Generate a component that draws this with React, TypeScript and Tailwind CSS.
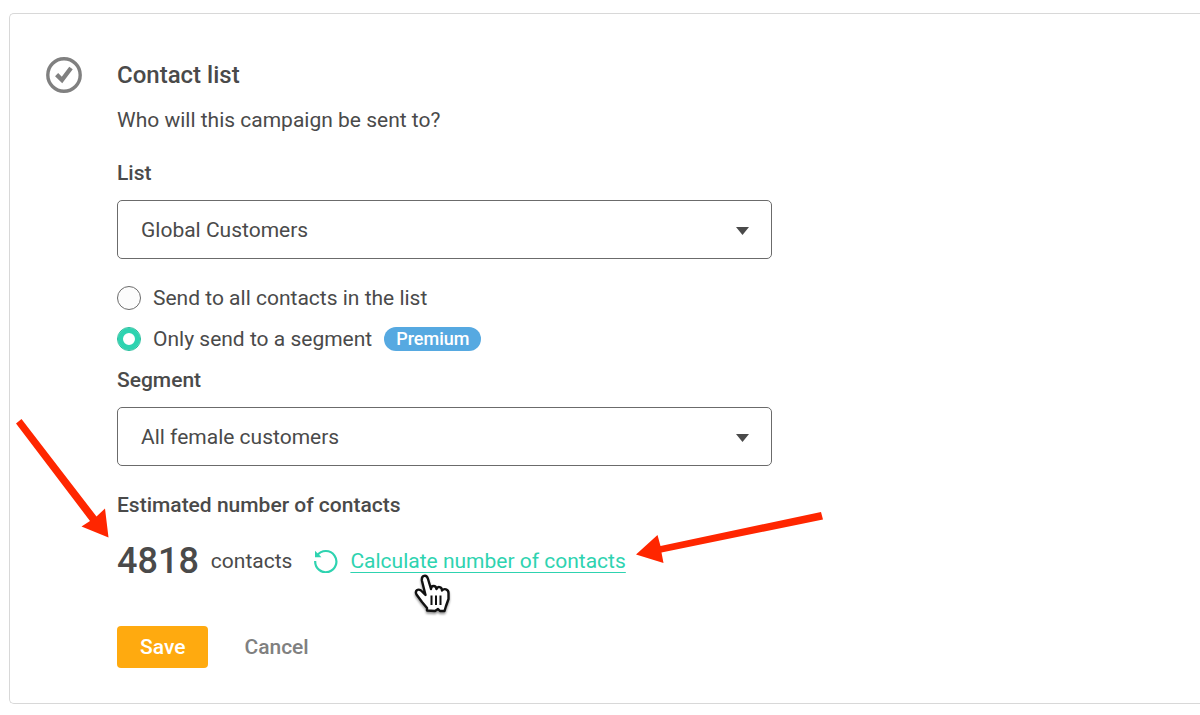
import React, { useState } from 'react';

interface SelectFieldProps {
  id: string;
  label: string;
  options: string[];
}

const SelectField: React.FC<SelectFieldProps> = ({ id, label, options }) => (
  <div className="flex flex-col gap-[15px]">
    <label htmlFor={id} className="text-[21px] leading-6 font-medium">{label}</label>
    <div className="relative">
      <select
        id={id}
        className="block w-full h-[59px] appearance-none rounded-[5px] border border-[#6b6b6b] bg-white px-[23px] text-[21px] leading-6 outline-none"
      >
        {options.map((option) => (
          <option key={option}>{option}</option>
        ))}
      </select>
      <svg className="pointer-events-none absolute right-[23px] top-[27px] h-[8px] w-[13px]" viewBox="0 0 13 8" aria-hidden="true">
        <path d="M0 0H13L6.5 8Z" fill="#4a4a4a" />
      </svg>
    </div>
  </div>
);

const radioClass =
  'size-6 shrink-0 appearance-none rounded-full border border-[#6b6b6b] bg-[#fcfcfc] checked:border-[#20bd9a] checked:bg-white checked:shadow-[inset_0_0_0_5px_#2ed3b0]';

const App: React.FC = () => {
  const [audience, setAudience] = useState('segment');

  return (
    <main className="min-h-screen overflow-hidden bg-white pt-[13px] pb-[10px] pl-[9px] font-['Roboto',sans-serif] text-[#4a4a4a]">
      <section className="flex items-start gap-[35px] rounded-l-[5px] border border-r-0 border-[#d8d8d8] pt-[43px] pr-4 pb-[35px] pl-9">
        <svg className="size-9 shrink-0" viewBox="0 0 36 36" fill="none" aria-hidden="true">
          <circle cx="18" cy="18" r="16.2" stroke="#808080" strokeWidth="3.4" />
          <path d="M10.6 17.6L16 23L25 11" stroke="#808080" strokeWidth="4.4" />
        </svg>

        <form className="flex w-full max-w-[655px] flex-col" onSubmit={(e) => e.preventDefault()}>
          <h2 className="text-[24px] leading-9 font-medium">Contact list</h2>
          <p className="mt-[15px] text-[21px] leading-6">Who will this campaign be sent to?</p>

          <div className="mt-[29px]">
            <SelectField id="list" label="List" options={['Global Customers']} />
          </div>

          <div className="mt-[27px] flex flex-col gap-[17px] text-[21px] leading-6">
            <label className="flex items-center gap-3">
              <input
                type="radio"
                name="audience"
                className={radioClass}
                checked={audience === 'all'}
                onChange={() => setAudience('all')}
              />
              Send to all contacts in the list
            </label>
            <label className="flex items-center gap-3">
              <input
                type="radio"
                name="audience"
                className={radioClass}
                checked={audience === 'segment'}
                onChange={() => setAudience('segment')}
              />
              Only send to a segment
              <span className="rounded-full bg-[#56a9e1] px-3 text-[18px] font-medium text-white">Premium</span>
            </label>
          </div>

          <div className="mt-[17px]">
            <SelectField id="segment" label="Segment" options={['All female customers']} />
          </div>

          <h3 className="mt-[27px] text-[21px] leading-6 font-medium">Estimated number of contacts</h3>

          <div className="relative mt-6 flex items-center text-[21px] leading-10">
            <strong className="text-[36px] font-medium">4818</strong>
            <span className="ml-3">contacts</span>
            <svg className="ml-[22px] size-6 shrink-0" viewBox="0 0 24 24" fill="none" aria-hidden="true">
              <path d="M3.2 6.4A10.6 10.6 0 1 1 1.2 12" stroke="#2ed3b0" strokeWidth="2.2" />
              <path d="M1 1.8V8.2H7.4L5.6 6.2Z" fill="#2ed3b0" />
            </svg>
            <a href="#calculate" className="ml-3 text-[#2ed3b0] underline decoration-1 underline-offset-4">
              Calculate number of contacts
            </a>

            <svg className="pointer-events-none absolute -left-[101px] -top-[122px] h-[120px] w-[94px]" viewBox="0 0 94 120" aria-hidden="true">
              <path d="M0 4.5L5.5 0L80.5 97.5L89 89.5L92.5 118.5L65.5 107.5L74 102Z" fill="#ff2600" />
            </svg>
            <svg className="pointer-events-none absolute left-[519px] -top-[29px] h-[52px] w-[188px]" viewBox="0 0 188 52" aria-hidden="true">
              <path d="M0 42.5L21.5 23L24.5 34L185 0L187 7.5L25.5 40.5L27.5 51Z" fill="#ff2600" />
            </svg>
            <svg className="pointer-events-none absolute left-[297px] top-[33px] h-[44px] w-[38px] drop-shadow-[0_2px_1px_#0006]" viewBox="0 0 38 44" aria-hidden="true">
              <path
                d="M13 36.5V34L8 28L2.5 20.5C0.5 16.5 4 14.5 7 16.5L11.5 21L8 7C7 1 12.5 0 14 5L17 15C17 11 22 11 22.5 15C23.5 12 28 12.5 28 16.5C30 14 34.5 15 34.5 19V25L32 32L30.5 37L26 37L24 35L21 37Z"
                fill="white"
                stroke="#111"
                strokeWidth="2.4"
                strokeLinejoin="round"
              />
              <path d="M17.5 21.5V31M22 21.5V31M26.5 21.5V31" stroke="#111" strokeWidth="2" />
            </svg>
          </div>

          <div className="mt-[45px] flex items-center gap-9 text-[21px] leading-6 font-medium">
            <button type="submit" className="h-[42px] rounded bg-[#ffaa0f] px-[23px] text-white">Save</button>
            <button type="button" className="text-[#808080]">Cancel</button>
          </div>
        </form>
      </section>
    </main>
  );
};

export default App;
